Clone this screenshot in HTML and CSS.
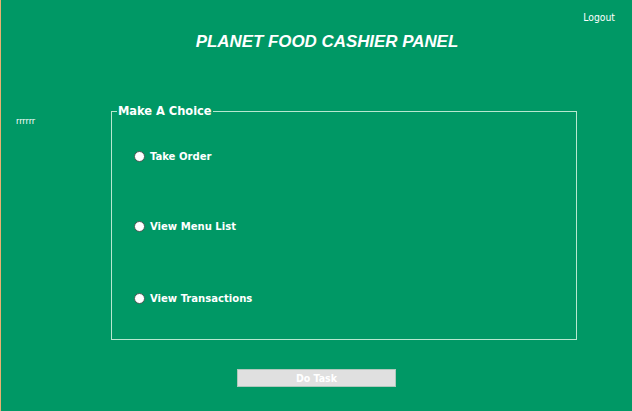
FILE: index.html
```html
<!DOCTYPE html>
<html>
<head>
<meta charset="utf-8">
<link rel="stylesheet" href="styles.css">
</head>
<body>
<div class="frame">
  <div class="topbar">
    <span class="logout">Logout</span>
  </div>
  <h1 class="title">PLANET FOOD CASHIER PANEL</h1>
  <div class="main">
    <div class="side">rrrrrr</div>
    <fieldset class="choices">
      <legend class="legend">Make A Choice</legend>
      <label class="opt opt-first"><span class="radio"></span>Take Order</label>
      <label class="opt opt-second"><span class="radio"></span>View Menu List</label>
      <label class="opt opt-third"><span class="radio"></span>View Transactions</label>
    </fieldset>
  </div>
  <div class="actions">
    <button class="btn">Do Task</button>
  </div>
</div>
</body>
</html>
```
FILE: styles.css
```css
html, body {
  margin: 0;
  padding: 0;
  width: 632px;
  height: 411px;
  overflow: hidden;
  background: #009865;
}
.frame {
  box-sizing: border-box;
  width: 632px;
  height: 411px;
  border-left: 1px solid #e8b070;
  color: #fff;
  font-family: "DejaVu Sans Condensed", "DejaVu Sans", sans-serif;
}
.topbar {
  display: flex;
  justify-content: flex-end;
  padding: 11px 17px 0 0;
  height: 13px;
}
.logout {
  font-size: 10.3px;
  line-height: 13px;
}
.title {
  margin: 8px 0 0 0;
  text-align: center;
  font-family: "Liberation Sans", Arial, sans-serif;
  font-style: italic;
  font-weight: bold;
  font-size: 16.9px;
  line-height: 20px;
  padding-left: 21px;
}
.main {
  display: flex;
  margin-top: 52px;
  height: 236px;
}
.side {
  width: 110px;
  padding: 12px 0 0 15px;
  font-size: 9px;
  box-sizing: border-box;
}
.choices {
  margin: 0;
  padding: 0;
  box-sizing: border-box;
  width: 466px;
  height: 236px;
  border: 1px solid #b8e8d0;
}
.legend {
  font-weight: bold;
  font-size: 12.7px;
  padding: 0 1px;
  margin-left: 5px;
  line-height: 14px;
}
.opt {
  display: flex;
  align-items: center;
  font-weight: bold;
  font-size: 11.2px;
  margin-left: 22px;
  height: 14px;
}
.opt-first { margin-top: 31px; }
.opt-second { margin-top: 56px; }
.opt-third { margin-top: 58px; }
.radio {
  width: 11px;
  height: 11px;
  border-radius: 50%;
  background: #fff;
  border: 1px solid #4a5a55;
  box-sizing: border-box;
  margin-right: 5px;
}
.actions {
  display: flex;
  justify-content: flex-start;
  padding-left: 236px;
  margin-top: 29px;
}
.btn {
  width: 159px;
  height: 18px;
  background: #e0e0e0;
  border: 1px solid #b0c8bc;
  color: #fff;
  font-family: "DejaVu Sans Condensed", "DejaVu Sans", sans-serif;
  font-weight: bold;
  font-size: 10.5px;
  padding: 0;
}
```
